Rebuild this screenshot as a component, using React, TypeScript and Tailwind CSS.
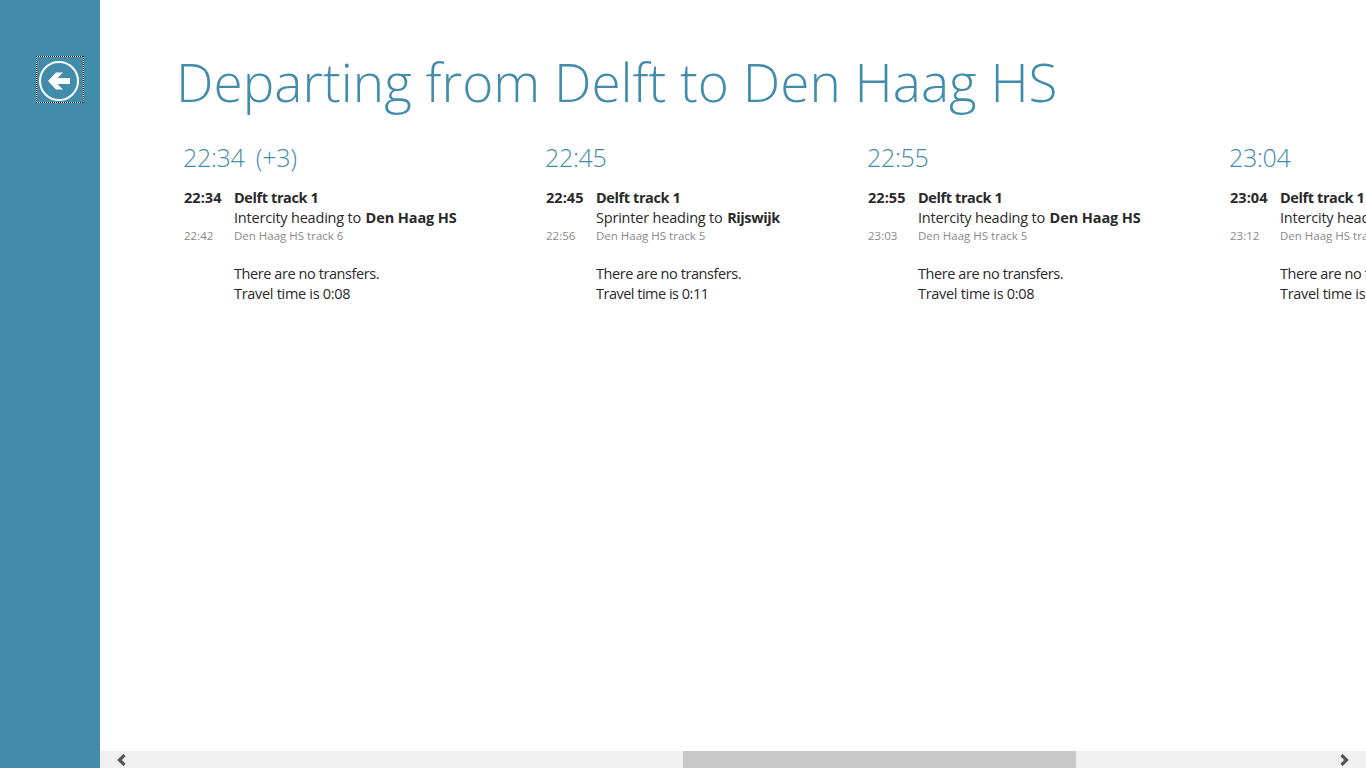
import React from "react";

type Col = { head: string; dep: string; kind: string; dest: string; destCls: string; arr: string; arrTrack: string; travel: string; travelCls: string; w: string };

const cols: Col[] = [
  { head: "22:34 (+3)", dep: "22:34", kind: "Intercity", dest: "Den Haag HS", destCls: "tracking-[-0.1px]", arr: "22:42", arrTrack: "Den Haag HS track 6", travel: "0:08", travelCls: "tracking-[-0.3px]", w: "w-[362px]" },
  { head: "22:45", dep: "22:45", kind: "Sprinter", dest: "Rijswijk", destCls: "tracking-[-0.4px]", arr: "22:56", arrTrack: "Den Haag HS track 5", travel: "0:11", travelCls: "tracking-[-0.5px]", w: "w-[322px]" },
  { head: "22:55", dep: "22:55", kind: "Intercity", dest: "Den Haag HS", destCls: "tracking-[-0.1px]", arr: "23:03", arrTrack: "Den Haag HS track 5", travel: "0:08", travelCls: "tracking-[-0.3px]", w: "w-[362px]" },
  { head: "23:04", dep: "23:04", kind: "Intercity", dest: "Den Haag HS", destCls: "tracking-[-0.1px]", arr: "23:12", arrTrack: "Den Haag HS track 5", travel: "0:08", travelCls: "tracking-[-0.3px]", w: "w-[362px]" },
];

function Column({ c }: { c: Col }) {
  return (
    <div className={`${c.w} shrink-0`}>
      <div className="h-[40px] pl-[6px] text-[25px] leading-[38px] font-light text-[#438cac] whitespace-nowrap tracking-[-0.3px] [word-spacing:5px]">{c.head}</div>
      <div className="mt-[10px] flex text-[#2a2a2a] text-[14.5px] leading-[20px] whitespace-nowrap">
        <div className="w-[57px] shrink-0 pl-[7px]">
          <div className="font-bold tracking-[0.05px]">{c.dep}</div>
          <div className="mt-[20px] h-[16px] text-[11.5px] leading-[16px] text-[#8a8a8a]">{c.arr}</div>
        </div>
        <div>
          <div className="font-bold tracking-[-0.4px]">Delft track 1</div>
          <div className="tracking-[-0.2px]">
            {c.kind} heading to <span className={`ml-[1px] font-bold ${c.destCls}`}>{c.dest}</span>
          </div>
          <div className="h-[16px] text-[11.5px] leading-[16px] text-[#8a8a8a] tracking-[0px]">{c.arrTrack}</div>
          <div className="mt-[20px] tracking-[-0.42px]">There are no transfers.</div>
          <div className={c.travelCls}>Travel time is {c.travel}</div>
        </div>
      </div>
    </div>
  );
}

export default function App() {
  return (
    <div className="flex h-[768px] w-[1366px] overflow-hidden bg-white font-['Open_Sans','Noto_Sans',sans-serif]">
      <aside className="w-[100px] shrink-0 bg-[#418bab] pt-[56px] pl-[36px]">
        <button className="block h-[47px] w-[48px]">
          <svg width="48" height="47" viewBox="0 0 48 47" fill="none" className="block">
            <path d="M0 .5H48M0 46.5H48M.5 0V47M47.5 0V47" stroke="white" />
            <path d="M0 .5H48M0 46.5H48M.5 0V47M47.5 0V47" stroke="black" strokeDasharray="1 1" />
            <circle cx="23" cy="25" r="19" stroke="white" strokeWidth="2" />
            <path d="M12 25 L20 16.5 H27 L21.5 22 H34 V28 H21.5 L27 33.5 H20 Z" fill="white" />
          </svg>
        </button>
      </aside>
      <main className="flex min-w-0 flex-1 flex-col">
        <div className="min-h-0 flex-1 overflow-hidden pl-[77px]">
          <h1 className="mt-[42px] h-[82px] -ml-px text-[53.1px] leading-[80px] font-light text-[#438cac] whitespace-nowrap">Departing from Delft to Den Haag HS</h1>
          <div className="mt-[14px] flex">
            {cols.map((c) => (
              <Column key={c.dep} c={c} />
            ))}
          </div>
        </div>
        <div className="flex h-[17px] shrink-0 items-center bg-[#f0f0f0]">
          <div className="flex h-full w-[583px] items-center pl-[16px]">
            <svg width="11" height="12" viewBox="0 0 11 12"><path d="M8.5 1 L3.5 6 L8.5 11" fill="none" stroke="#555" strokeWidth="3.2" /></svg>
          </div>
          <div className="h-full w-[393px] bg-[#c8c8c8]" />
          <div className="flex h-full flex-1 items-center justify-end pr-[16px]">
            <svg width="11" height="12" viewBox="0 0 11 12"><path d="M2.5 1 L7.5 6 L2.5 11" fill="none" stroke="#555" strokeWidth="3.2" /></svg>
          </div>
        </div>
      </main>
    </div>
  );
}
